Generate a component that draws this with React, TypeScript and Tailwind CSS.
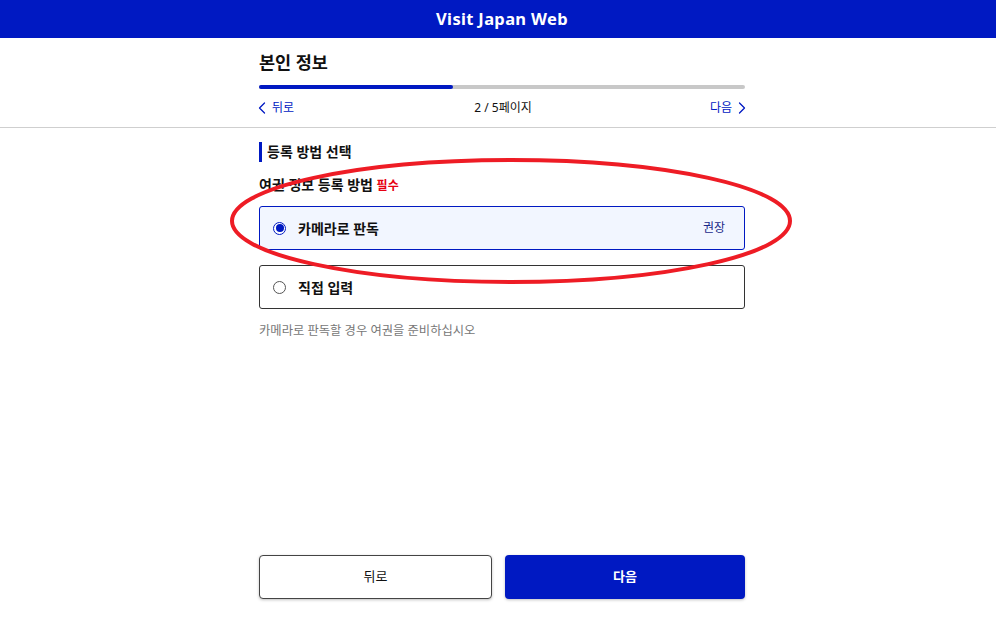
import { ChevronLeft, ChevronRight } from 'lucide-react';

const font = { fontFamily: '"Noto Sans", "Noto Sans CJK KR", sans-serif' };

function Radio({ checked }: { checked: boolean }) {
  return checked ? (
    <span className="w-[13px] h-[13px] rounded-full border border-[#0019c2] flex items-center justify-center bg-white">
      <span className="w-[8px] h-[8px] rounded-full bg-[#0019c2]" />
    </span>
  ) : (
    <span className="w-[13px] h-[13px] rounded-full border border-[#555] bg-white" />
  );
}

export default function App() {
  return (
    <div className="relative min-h-screen flex flex-col bg-white text-[#111]" style={font}>
      <header className="h-[38px] bg-[#0019c2] flex items-center justify-center pl-[8px]">
        <span className="text-white text-[16.5px] font-bold tracking-[0.02em]">Visit Japan Web</span>
      </header>

      <div className="border-b border-[#cfcfcf] pl-[8px]">
        <div className="w-[486px] mx-auto pt-[12px] pb-[10px]">
          <h1 className="text-[17.5px] leading-[24px] font-bold">본인 정보</h1>
          <div className="mt-[11px] h-[4px] rounded-full bg-[#c8c8c8]">
            <div className="h-full w-[40%] rounded-full bg-[#0019c2]" />
          </div>
          <div className="mt-[10px] h-[18px] flex items-center justify-between text-[12px] leading-[18px]">
            <span className="flex items-center text-[#0019c2]">
              <ChevronLeft size={20} strokeWidth={1.5} className="ml-[-7px] -my-[1px]" />
              뒤로
            </span>
            <span className="ml-[2px]">2 / 5페이지</span>
            <span className="flex items-center text-[#0019c2]">
              다음
              <ChevronRight size={20} strokeWidth={1.5} className="mr-[-7px] -my-[1px]" />
            </span>
          </div>
        </div>
      </div>

      <div className="flex-1 flex pl-[8px]">
        <main className="w-[486px] mx-auto flex flex-col pt-[14px] pb-[25px]">
          <h2 className="border-l-[3px] border-[#0019c2] pl-[5px] text-[14px] leading-[20px] font-bold">
            등록 방법 선택
          </h2>
          <p className="mt-[13px] text-[14px] leading-[20px] font-semibold">
            여권 정보 등록 방법 <span className="text-[12px] text-[#e60012] font-semibold">필수</span>
          </p>

          <label className="mt-[10px] h-[44px] rounded-[3px] border border-[#0019c2] bg-[#f2f6ff] flex items-center px-[13px]">
            <Radio checked />
            <span className="ml-[12px] text-[14px] font-semibold">카메라로 판독</span>
            <span className="ml-auto mr-[6px] text-[12px] text-[#1a2a8a]">권장</span>
          </label>

          <label className="mt-[15px] h-[44px] rounded-[3px] border border-[#333] bg-white flex items-center px-[13px]">
            <Radio checked={false} />
            <span className="ml-[12px] text-[14px] font-semibold">직접 입력</span>
          </label>

          <p className="mt-[13px] text-[12.3px] leading-[18px] text-[#777]">카메라로 판독할 경우 여권을 준비하십시오</p>

          <div className="mt-auto flex gap-[13px]">
            <button className="w-[233px] h-[44px] rounded-[4px] border border-[#444] bg-white text-[13px] shadow-[0_1px_3px_rgba(0,0,0,0.25)]">
              뒤로
            </button>
            <button className="flex-1 h-[44px] rounded-[4px] bg-[#0019c2] text-white text-[13px] font-bold shadow-[0_1px_3px_rgba(0,0,0,0.25)]">
              다음
            </button>
          </div>
        </main>
      </div>

      <svg className="absolute left-0 top-0 pointer-events-none" width="996" height="624">
        <ellipse cx="511" cy="221" rx="279" ry="61" fill="none" stroke="#ee1c25" strokeWidth="4" />
      </svg>
    </div>
  );
}
